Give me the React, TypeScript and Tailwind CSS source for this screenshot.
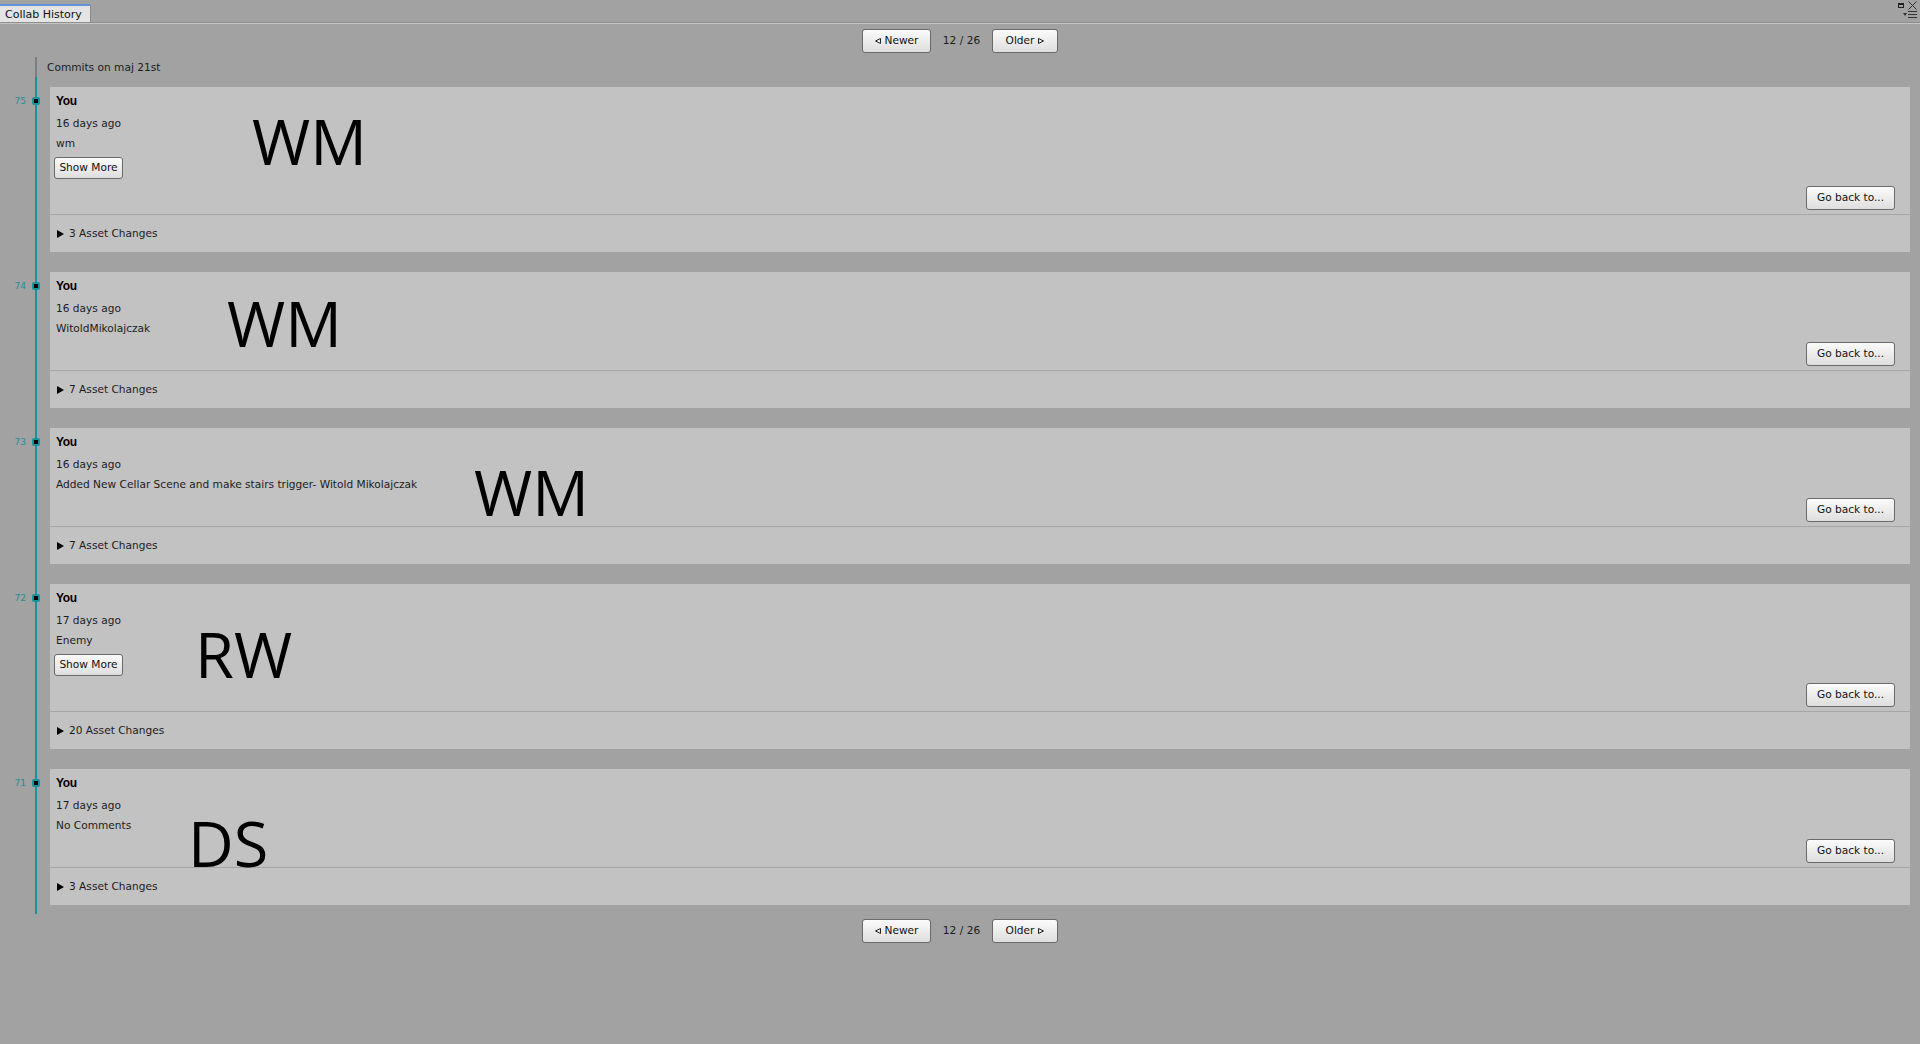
const commits = [
  { num: 75, age: "16 days ago", comment: "wm", showMore: true, assets: 3, initials: "WM", pos: "left-[202px] top-[22px]" },
  { num: 74, age: "16 days ago", comment: "WitoldMikolajczak", showMore: false, assets: 7, initials: "WM", pos: "left-[177px] top-[19px]" },
  { num: 73, age: "16 days ago", comment: "Added New Cellar Scene and make stairs trigger- Witold Mikolajczak", showMore: false, assets: 7, initials: "WM", pos: "left-[424px] top-[32px]" },
  { num: 72, age: "17 days ago", comment: "Enemy", showMore: true, assets: 20, initials: "RW", pos: "left-[145px] top-[38px]" },
  { num: 71, age: "17 days ago", comment: "No Comments", showMore: false, assets: 3, initials: "DS", pos: "left-[138px] top-[42px]" },
];

function Btn({ children, className = "" }: { children: React.ReactNode; className?: string }) {
  return (
    <button className={"flex items-center justify-center gap-[4px] rounded-[3px] border border-[#6a6a6a] bg-gradient-to-b from-[#fbfbfb] to-[#dedede] text-[#111] " + className}>
      {children}
    </button>
  );
}

function Pager() {
  return (
    <div className="flex items-center justify-center gap-[11px]">
      <Btn className="h-[24px] w-[69px]">
        <svg width="6" height="6" viewBox="0 0 6 6"><path d="M5.5 0.5 L0.5 3 L5.5 5.5 Z" fill="none" stroke="#222" strokeWidth="1" /></svg>
        Newer
      </Btn>
      <span className="w-[39px] text-center">12 / 26</span>
      <Btn className="h-[24px] w-[66px]">
        Older
        <svg width="6" height="6" viewBox="0 0 6 6"><path d="M0.5 0.5 L5.5 3 L0.5 5.5 Z" fill="none" stroke="#222" strokeWidth="1" /></svg>
      </Btn>
    </div>
  );
}

function Card({ c }: { c: (typeof commits)[number] }) {
  return (
    <div className="relative bg-[#c2c2c2]">
      <span className="absolute left-[-38px] top-[8px] w-[14px] text-right text-[9px] leading-[12px] text-[#1f8f99]">{c.num}</span>
      <span className="absolute left-[-18px] top-[10px] flex h-[8px] w-[8px] items-center justify-center rounded-[2px] bg-[#17939d]">
        <span className="h-[4px] w-[4px] bg-black" />
      </span>
      <span className={"absolute font-['Open_Sans',sans-serif] text-[63px] leading-none text-black " + c.pos}>{c.initials}</span>
      <div className={"flex items-end justify-between pb-[4px] pl-[6px] pr-[15px] " + (c.showMore ? "h-[127px]" : "h-[98px]")}>
        <div className="flex h-full flex-col pt-[4px]">
          <div className="h-[20px] font-['Liberation_Sans',sans-serif] text-[12px] font-bold leading-[20px] tracking-[-0.4px] text-black">You</div>
          <div className="mt-[2px] h-[20px] leading-[20px]">{c.age}</div>
          <div className="h-[20px] leading-[20px]">{c.comment}</div>
          {c.showMore && <Btn className="ml-[-2px] mt-[4px] h-[22px] w-[69px]">Show More</Btn>}
        </div>
        <Btn className="relative h-[24px] w-[89px]">Go back to...</Btn>
      </div>
      <div className="h-px bg-[#a6a6a6]" />
      <div className="flex h-[37px] items-center gap-[5px] pl-[7px] pt-[1px]">
        <svg width="7" height="8" viewBox="0 0 7 8"><path d="M0 0 L7 4 L0 8 Z" fill="#000" /></svg>
        <span>{c.assets} Asset Changes</span>
      </div>
    </div>
  );
}

export default function App() {
  return (
    <div className="relative h-[1044px] w-[1920px] overflow-hidden bg-[#a2a2a2] font-['DejaVu_Sans',sans-serif] text-[10.6px] text-[#1c1c1c]">
      <div className="relative flex h-[23px] items-end border-b border-[#8e8e8e]">
        <div className="h-[18px] w-[91px] rounded-tr-[2px] border-r border-t-2 border-r-[#8a8a8a] border-t-[#5d93db] bg-[#e4e4e4] px-[5px] pt-[2px] text-[11px] leading-[14px] text-[#111]">
          Collab History
        </div>
        <div className="absolute right-[3px] top-[1px] flex flex-col items-end">
          <div className="flex items-center gap-[4px]">
            <span className="h-[5px] w-[6px] border border-t-2 border-[#222]" />
            <svg width="9" height="9" viewBox="0 0 9 9"><path d="M0.5 0.5 L8.5 8.5 M8.5 0.5 L0.5 8.5" stroke="#333" strokeWidth="1" /></svg>
          </div>
          <div className="mt-[1px] flex items-center gap-[1px]">
            <svg width="4" height="3" viewBox="0 0 4 3"><path d="M0 0 L4 0 L2 3 Z" fill="#333" /></svg>
            <svg width="9" height="7" viewBox="0 0 9 7"><path d="M0 0.5 H9 M0 3.5 H9 M0 6.5 H9" stroke="#333" strokeWidth="1" /></svg>
          </div>
        </div>
      </div>
      <div className="h-px bg-[#c4c4c4]" />

      <div className="mt-[5px]">
        <Pager />
      </div>

      <div className="ml-[35px] mr-[10px] mt-[4px]">
        <div className="h-[20px] border-l-2 border-[#7e7e7e] pl-[10px] leading-[20px]">Commits on maj 21st</div>
        <div className="flex flex-col gap-[20px] border-l-2 border-[#16939d] pb-[9px] pl-[13px] pt-[10px]">
          {commits.map((c) => (
            <Card key={c.num} c={c} />
          ))}
        </div>
      </div>

      <div className="mt-[5px]">
        <Pager />
      </div>
    </div>
  );
}
